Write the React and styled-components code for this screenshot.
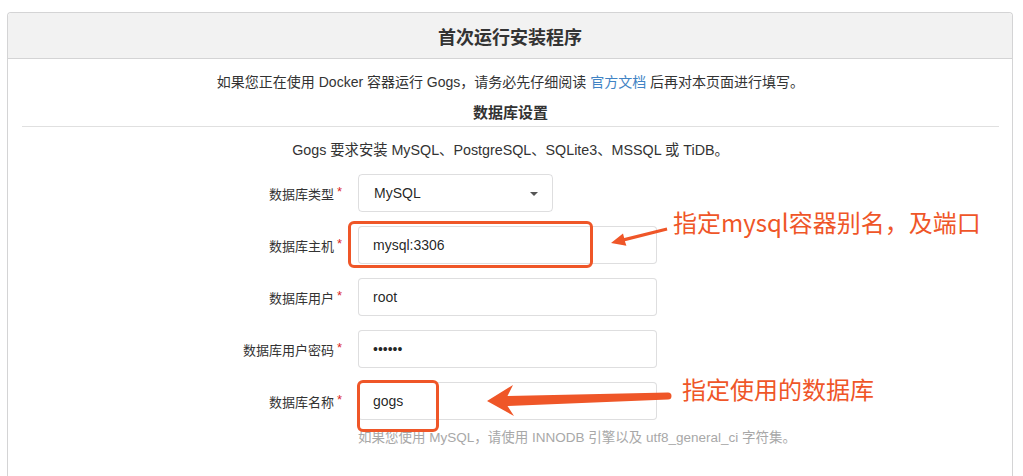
import React from "react";
import styled, { createGlobalStyle } from "styled-components";

const ORANGE = "#ef5628";

const GlobalStyle = createGlobalStyle`
  html, body {
    margin: 0;
    padding: 0;
    background: #fff;
    overflow: hidden;
  }
  body {
    font-family: "Liberation Sans", "Noto Sans CJK SC", sans-serif;
    color: rgba(0, 0, 0, 0.87);
  }
`;

const Page = styled.div`
  position: relative;
  width: 1023px;
  height: 476px;
  padding-top: 12px;
  box-sizing: border-box;
  display: flex;
  flex-direction: column;
  overflow: hidden;
`;

const Card = styled.div`
  flex: 1;
  margin-left: 7px;
  width: 1006px;
  border: 1px solid #d4d4d5;
  border-bottom: none;
  border-radius: 4px 4px 0 0;
  box-sizing: border-box;
`;

const CardHeader = styled.h3`
  margin: 0;
  height: 45px;
  background: #f2f2f2;
  border-bottom: 1px solid #d4d4d5;
  border-radius: 4px 4px 0 0;
  display: flex;
  align-items: center;
  justify-content: center;
  font-size: 18px;
  font-weight: 700;
  color: #333;
`;

const CardBody = styled.div`
  padding: 13px 13px 0 14px;
`;

const Centered = styled.p`
  margin: ${(p) => p.$mt || 0}px 0 0;
  text-align: center;
  font-size: ${(p) => p.$size || 14}px;
  line-height: 20px;
  color: #333;
`;

const Link = styled.a`
  color: #4183c4;
  text-decoration: none;
`;

const SectionTitle = styled.h4`
  margin: 11px 0 0;
  padding-bottom: 3px;
  border-bottom: 1px solid #e0e0e0;
  text-align: center;
  font-size: 15px;
  line-height: 20px;
  font-weight: 700;
  color: #333;
`;

const Form = styled.div`
  margin-top: 14px;
  display: flex;
  flex-direction: column;
  gap: 14px;
`;

const Row = styled.div`
  display: flex;
  align-items: center;
  height: 38px;
`;

const Label = styled.label`
  width: 320px;
  margin-right: 16px;
  text-align: right;
  font-size: 13px;
  color: #333;

  &::after {
    content: "*";
    color: #db2828;
    margin-left: 3px;
    position: relative;
    top: -3px;
  }
`;

const Input = styled.input`
  width: ${(p) => p.$w || 299}px;
  height: 38px;
  box-sizing: border-box;
  padding: 0 14px;
  border: 1px solid rgba(34, 36, 38, 0.15);
  border-radius: 4px;
  font-family: "Liberation Sans", "Noto Sans CJK SC", sans-serif;
  font-size: 14px;
  color: rgba(0, 0, 0, 0.87);
  outline: none;
  background: #fff;
`;

const Select = styled.div`
  width: 195px;
  height: 38px;
  box-sizing: border-box;
  padding: 0 14px 0 15px;
  border: 1px solid rgba(34, 36, 38, 0.15);
  border-radius: 4px;
  display: flex;
  align-items: center;
  justify-content: space-between;
  font-size: 14px;
  color: rgba(0, 0, 0, 0.87);
`;

const Caret = styled.span`
  width: 0;
  height: 0;
  border-left: 4px solid transparent;
  border-right: 4px solid transparent;
  border-top: 4px solid #555;
  margin-top: 1px;
`;

const Help = styled.p`
  margin: 8px 0 0 336px;
  font-size: 13.5px;
  line-height: 20px;
  color: #a8a8a8;
`;

const Box = styled.div`
  position: absolute;
  left: ${(p) => p.$x}px;
  top: ${(p) => p.$y}px;
  width: ${(p) => p.$w}px;
  height: ${(p) => p.$h}px;
  box-sizing: border-box;
  border: 3px solid ${ORANGE};
  border-radius: 6px;
  pointer-events: none;
`;

const Note = styled.div`
  position: absolute;
  left: ${(p) => p.$x}px;
  top: ${(p) => p.$y}px;
  font-family: "Noto Sans CJK SC", sans-serif;
  font-size: 24px;
  line-height: 24px;
  color: ${ORANGE};
  white-space: nowrap;
`;

const ArrowLayer = styled.svg`
  position: absolute;
  left: 0;
  top: 0;
  pointer-events: none;
`;

export default function App() {
  return (
    <>
      <GlobalStyle />
      <Page>
        <Card>
          <CardHeader>首次运行安装程序</CardHeader>
          <CardBody>
            <Centered>
              如果您正在使用 Docker 容器运行 Gogs，请务必先仔细阅读{" "}
              <Link href="#">官方文档</Link> 后再对本页面进行填写。
            </Centered>
            <SectionTitle>数据库设置</SectionTitle>
            <Centered $mt={13} $size={14.3}>
              Gogs 要求安装 MySQL、PostgreSQL、SQLite3、MSSQL 或 TiDB。
            </Centered>
            <Form>
              <Row>
                <Label>数据库类型</Label>
                <Select>
                  MySQL
                  <Caret />
                </Select>
              </Row>
              <Row>
                <Label>数据库主机</Label>
                <Input defaultValue="mysql:3306" readOnly />
              </Row>
              <Row>
                <Label>数据库用户</Label>
                <Input defaultValue="root" readOnly />
              </Row>
              <Row>
                <Label>数据库用户密码</Label>
                <Input type="password" defaultValue="123456" readOnly />
              </Row>
              <Row>
                <Label>数据库名称</Label>
                <Input defaultValue="gogs" readOnly />
              </Row>
            </Form>
            <Help>如果您使用 MySQL，请使用 INNODB 引擎以及 utf8_general_ci 字符集。</Help>
          </CardBody>
        </Card>

        <Box $x={348} $y={221} $w={245} $h={47} />
        <Box $x={357} $y={380} $w={82} $h={52} />

        <ArrowLayer width="1023" height="476" viewBox="0 0 1023 476">
          <polygon
            fill={ORANGE}
            points="611,243 623,233.5 624.2,238.1 666.7,227.6 667.4,230.4 624.9,241.3 626.4,245.8"
          />
          <path
            fill={ORANGE}
            d="M487,401 L513,385 L507.5,396 L668,392.5 A3.5,3.5 0 0 1 668,399.5 L507.5,406 L514,416 Z"
          />
        </ArrowLayer>

        <Note $x={673} $y={210}>指定mysql容器别名，及端口</Note>
        <Note $x={682} $y={377}>指定使用的数据库</Note>
      </Page>
    </>
  );
}
